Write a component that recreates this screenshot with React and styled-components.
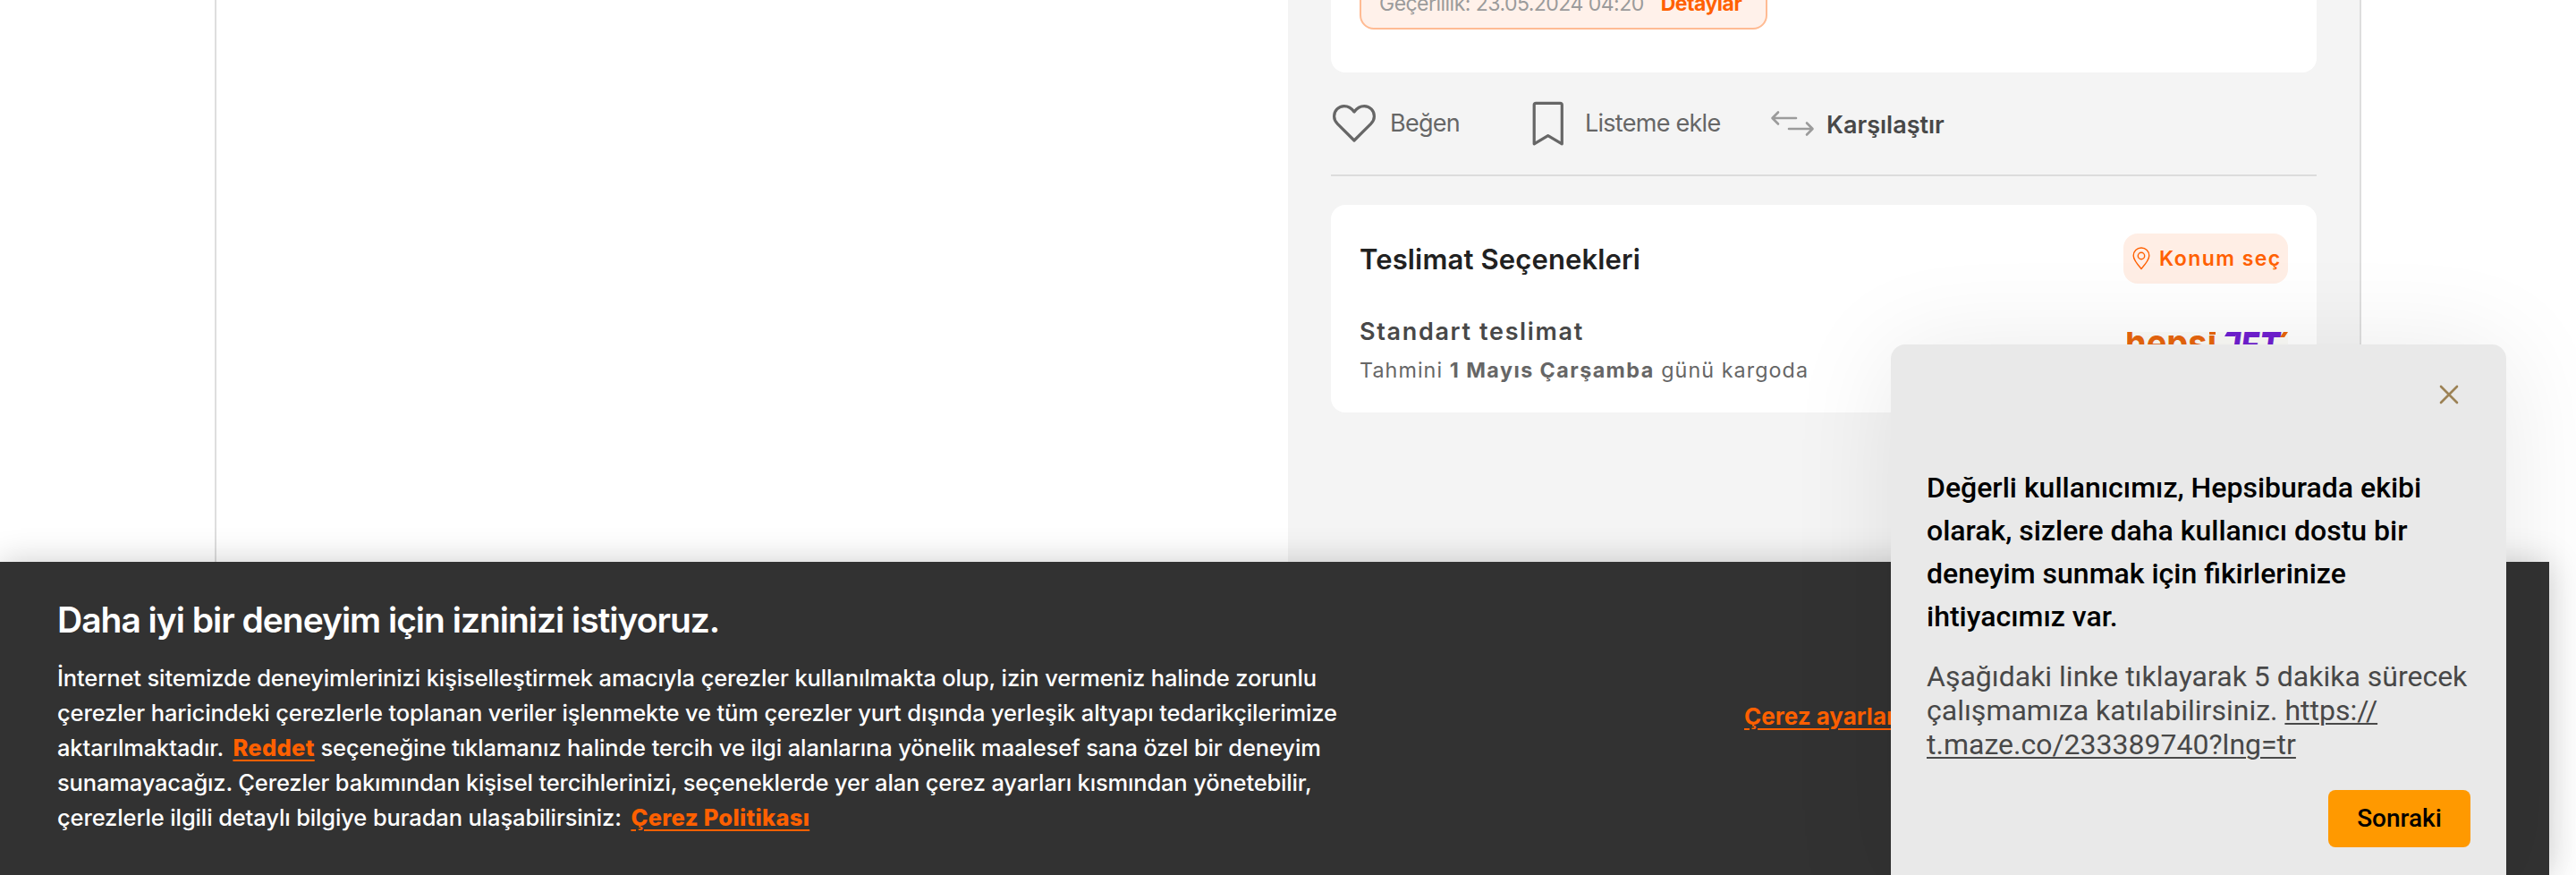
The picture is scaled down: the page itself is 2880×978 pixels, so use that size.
import React from 'react';
import styled, { createGlobalStyle } from 'styled-components';

const GlobalStyle = createGlobalStyle`
  * { box-sizing: border-box; margin: 0; padding: 0; }
  body { background: #fff; font-family: Inter, "Liberation Sans", sans-serif; overflow: hidden; }
`;
const Page = styled.div`position: relative; width: 2880px; height: 978px; overflow: hidden; background: #fff;`;
const Container = styled.main`
  width: 2400px; height: 978px; margin: 0 auto; display: grid; grid-template-columns: 1fr 1198px;
  border: solid #dedede; border-width: 0 2px;
`;
const Gallery = styled.div``;
const Side = styled.aside`background: #f4f4f4; padding: 0 48px;`;
const TopCard = styled.section`
  height: 81px; background: #fff; border-radius: 0 0 16px 16px; padding: 0 32px 48px;
  display: flex; flex-direction: column; justify-content: flex-end; align-items: flex-start;
`;
const Coupon = styled.div`
  flex: none; width: 456px; height: 90px; padding: 0 20px 11px; border: 2px solid #ffbb93; border-radius: 16px;
  background: #fff1ea; display: flex; align-items: flex-end; white-space: nowrap; gap: 19px;
`;
const Validity = styled.span`font-size: 23px; line-height: 32px; letter-spacing: -0.53px; color: #9b9b9b;`;
const Details = styled.span`font-size: 23px; line-height: 32px; font-weight: 700; letter-spacing: -0.5px; color: #ff6000;`;
const Actions = styled.div`height: 116px; border-bottom: 2px solid #dcdcdc; display: flex; align-items: center;`;
const Action = styled.div`
  display: flex; align-items: center; width: ${p => p.$w}px; gap: ${p => p.$gap}px; white-space: nowrap;
`;
const ActionLabel = styled.span`
  font-size: 27px; line-height: 32px; font-weight: ${p => (p.$strong ? 600 : 400)};
  letter-spacing: ${p => (p.$strong ? 0 : -0.73)}px; color: ${p => (p.$strong ? '#484848' : '#666')};
  padding-top: ${p => (p.$strong ? 3 : 0)}px;
`;
const Delivery = styled.section`
  margin-top: 32px; height: 232px; padding: 32px 32px 0; border-radius: 16px; background: #fff;
`;
const Row = styled.div`display: flex; justify-content: space-between; align-items: ${p => (p.$top ? 'flex-start' : 'center')};`;
const DeliveryTitle = styled.h2`
  padding-top: 1px; font-size: 31px; line-height: 40px; font-weight: 600; letter-spacing: 0.15px; color: #212121;
`;
const LocationButton = styled.button`
  width: 184px; height: 56px; border: 0; border-radius: 16px; background: #ffeee5; padding: 0 0 0 10px;
  display: flex; align-items: center; gap: 10px; color: #ff6000; font: 600 23px/32px Inter, sans-serif;
  letter-spacing: 1.45px; white-space: nowrap;
`;
const Method = styled.div`padding-top: 34px;`;
const MethodName = styled.h3`font-size: 27px; line-height: 40px; font-weight: 600; letter-spacing: 1.66px; color: #484848;`;
const Estimate = styled.p`
  margin-top: 3px; font-size: 23.3px; line-height: 40px; letter-spacing: 1.07px; color: #666;
  b { font-weight: 700; letter-spacing: 1.44px; }
`;
const Carrier = styled.svg`display: block; margin-top: 54px; width: 180px; height: 40px; overflow: hidden;`;

const CookieBar = styled.section`
  position: absolute; left: 0; bottom: 0; width: 2850px; height: 350px; padding: 41px 0 0 64px;
  background: #323232; color: #fff; box-shadow: 0 0 36px rgba(0, 0, 0, 0.2); display: flex; align-items: flex-start;
`;
const CookieText = styled.div`width: 1886px; white-space: nowrap;`;
const CookieTitle = styled.h2`font-size: 39px; line-height: 48px; font-weight: 600; letter-spacing: -1.02px;`;
const CookieCopy = styled.p`
  margin-top: 21px; font-size: 25.5px; line-height: 39px; font-weight: 500; letter-spacing: -0.135px;
`;
const CopyLine = styled.span`display: block; letter-spacing: ${p => p.$track}px;`;
const OrangeLink = styled.a`
  color: #ff6000; font-weight: 700; text-decoration: underline; text-decoration-thickness: 2px;
  text-underline-offset: 4px; margin-left: ${p => p.$indent || 0}px;
`;
const CopyLink = styled(OrangeLink)`font-weight: 800; letter-spacing: 0.3px;`;
const Settings = styled(OrangeLink)`margin-top: 112px; font-size: 26px; line-height: 39px; white-space: nowrap;`;

const Popup = styled.section`
  position: absolute; left: 2114px; top: 385px; width: 688px; height: 610px; padding: 136px 40px 0;
  background: #e9e9e9; border-radius: 16px; box-shadow: 0 8px 120px rgba(0, 0, 0, 0.09);
  font-family: Roboto, sans-serif; white-space: nowrap;
`;
const Close = styled.svg`position: absolute; right: 52px; top: 44px;`;
const PopupTitle = styled.h2`font-size: 32px; line-height: 48px; font-weight: 500; color: #000;`;
const PopupCopy = styled.p`
  margin-top: 23.6px; font-size: 32px; line-height: 38.4px; color: #484848;
  a { text-decoration: underline; text-decoration-thickness: 2px; text-underline-offset: 3px; }
`;
const Next = styled.button`
  display: block; width: 159px; height: 64px; margin: 31px 0 0 auto; border: 0; border-radius: 8px;
  background: #ff9900; color: #000; font: 500 28px/64px Roboto, sans-serif;
`;

export default function App() {
  return (
    <Page>
      <GlobalStyle />
      <Container>
        <Gallery />
        <Side>
          <TopCard>
            <Coupon>
              <Validity>Geçerlilik: 23.05.2024 04:20</Validity>
              <Details>Detaylar</Details>
            </Coupon>
          </TopCard>
          <Actions>
            <Action $w={223} $gap={14}>
              <svg width="52" height="48" viewBox="0 0 52 48" fill="none" stroke="#666" strokeWidth="3.2" strokeLinejoin="round">
                <path d="M26 11C23 6.800 19 4.600 14.800 4.600C8.500 4.600 3.600 9.700 3.600 16C3.600 19.500 5 22 7.300 24.300L26 43L44.700 24.300C47 22 48.400 19.500 48.400 16C48.400 9.700 43.500 4.600 37.200 4.600C33 4.600 29 6.800 26 11Z" />
              </svg>
              <ActionLabel>Beğen</ActionLabel>
            </Action>
            <Action $w={267} $gap={23}>
              <svg width="38" height="52" viewBox="0 0 38 52" fill="none" stroke="#666" strokeWidth="3.2" strokeLinejoin="round">
                <path d="M6.200 3.300H33.300Q35.300 3.300 35.300 5.300V48.800L19.700 39.700L4.200 48.800V5.300Q4.200 3.300 6.200 3.300Z" />
              </svg>
              <ActionLabel>Listeme ekle</ActionLabel>
            </Action>
            <Action $w={220} $gap={12}>
              <svg width="52" height="32" viewBox="0 0 52 32" fill="none" stroke="#9b9b9b" strokeWidth="2.6" strokeLinecap="round" strokeLinejoin="round">
                <path d="M30 10H4M10 3.500L3.500 10L10 16.500M22 22H48M42 15.500L48.500 22L42 28.500" />
              </svg>
              <ActionLabel $strong>Karşılaştır</ActionLabel>
            </Action>
          </Actions>
          <Delivery>
            <Row>
              <DeliveryTitle>Teslimat Seçenekleri</DeliveryTitle>
              <LocationButton>
                <svg width="20" height="26" viewBox="0 0 20 26" fill="none" stroke="#ff6000" strokeWidth="1.4">
                  <path d="M10 24.500C6 20 1.200 14.500 1.200 9.800A8.800 8.800 0 0 1 18.800 9.800C18.800 14.500 14 20 10 24.500Z" />
                  <circle cx="10" cy="10" r="3.7" />
                </svg>
                Konum seç
              </LocationButton>
            </Row>
            <Row $top>
              <Method>
                <MethodName>Standart teslimat</MethodName>
                <Estimate>Tahmini <b>1 Mayıs Çarşamba</b> günü kargoda</Estimate>
              </Method>
              <Carrier viewBox="0 0 180 40">
                <rect width="180" height="40" fill="#fbfbf7" />
                <text x="-2" y="27" fontFamily="Inter" fontWeight="700" fontSize="42" fill="#e8650c" textLength="102" lengthAdjust="spacingAndGlyphs">hepsi</text>
                <path d="M92 0H99V3H92Z" fill="#e8650c" />
                <text x="107" y="31" fontFamily="Inter" fontWeight="800" fontStyle="italic" fontSize="42" fill="#6f1fd0" textLength="64" lengthAdjust="spacingAndGlyphs">JET</text>
                <path d="M112 0H124L121 5H109Z" fill="#6f1fd0" />
                <path d="M175 0H180L176 6H171Z" fill="#e8650c" />
              </Carrier>
            </Row>
          </Delivery>
        </Side>
      </Container>
      <CookieBar>
        <CookieText>
          <CookieTitle>Daha iyi bir deneyim için izninizi istiyoruz.</CookieTitle>
          <CookieCopy>
            <CopyLine $track={-0.13}>İnternet sitemizde deneyimlerinizi kişiselleştirmek amacıyla çerezler kullanılmakta olup, izin vermeniz halinde zorunlu</CopyLine>
            <CopyLine $track={-0.135}>çerezler haricindeki çerezlerle toplanan veriler işlenmekte ve tüm çerezler yurt dışında yerleşik altyapı tedarikçilerimize</CopyLine>
            <CopyLine $track={-0.12}>aktarılmaktadır. <CopyLink $indent={4}>Reddet</CopyLink> seçeneğine tıklamanız halinde tercih ve ilgi alanlarına yönelik maalesef sana özel bir deneyim</CopyLine>
            <CopyLine $track={-0.165}>sunamayacağız. Çerezler bakımından kişisel tercihlerinizi, seçeneklerde yer alan çerez ayarları kısmından yönetebilir,</CopyLine>
            <CopyLine $track={-0.13}>çerezlerle ilgili detaylı bilgiye buradan ulaşabilirsiniz: <CopyLink $indent={4}>Çerez Politikası</CopyLink></CopyLine>
          </CookieCopy>
        </CookieText>
        <Settings>Çerez ayarları</Settings>
      </CookieBar>
      <Popup>
        <Close width="24" height="24" viewBox="0 0 24 24" stroke="#9c8255" strokeWidth="2.6" strokeLinecap="round">
          <path d="M3 3L21 21M21 3L3 21" />
        </Close>
        <PopupTitle>
          Değerli kullanıcımız, Hepsiburada ekibi<br />
          olarak, sizlere daha kullanıcı dostu bir<br />
          deneyim sunmak için fikirlerinize<br />
          ihtiyacımız var.
        </PopupTitle>
        <PopupCopy>
          Aşağıdaki linke tıklayarak 5 dakika sürecek<br />
          çalışmamıza katılabilirsiniz. <a>https://<br />t.maze.co/233389740?lng=tr</a>
        </PopupCopy>
        <Next>Sonraki</Next>
      </Popup>
    </Page>
  );
}
